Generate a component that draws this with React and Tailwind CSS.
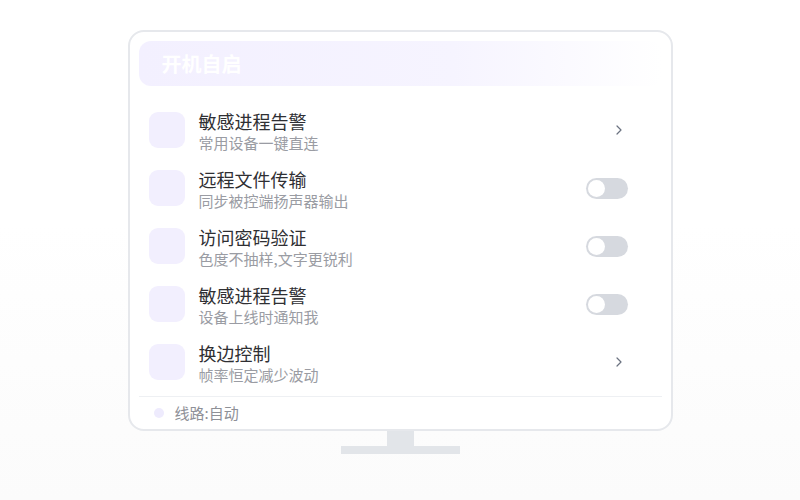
const rows = [
  { title: '敏感进程告警', sub: '常用设备一键直连', kind: 'chevron' },
  { title: '远程文件传输', sub: '同步被控端扬声器输出', kind: 'toggle' },
  { title: '访问密码验证', sub: '色度不抽样,文字更锐利', kind: 'toggle' },
  { title: '敏感进程告警', sub: '设备上线时通知我', kind: 'toggle' },
  { title: '换边控制', sub: '帧率恒定减少波动', kind: 'chevron' },
];

function Toggle() {
  return (
    <div className="flex h-[21px] w-[42px] items-center rounded-full bg-[#d6d9df] p-[2px]">
      <div className="h-[17px] w-[17px] rounded-full bg-white" />
    </div>
  );
}

function Chevron() {
  return (
    <div className="flex w-[42px] justify-end pr-[5px]">
      <svg width="8" height="12" viewBox="0 0 8 12" fill="none">
        <path d="M2 2l4 4-4 4" stroke="#6b7280" strokeWidth="1.2" strokeLinecap="round" strokeLinejoin="round" />
      </svg>
    </div>
  );
}

export default function App() {
  return (
    <div
      className="flex h-[500px] w-[800px] flex-col items-center bg-gradient-to-b from-white from-45% to-[#fbfbfb] pt-[30px]"
      style={{ fontFamily: '"Noto Sans CJK SC", "Noto Sans", sans-serif' }}
    >
      <div className="flex h-[401px] w-[545px] flex-col rounded-[16px] border-2 border-[#e6e8ec] bg-white px-[9px] pt-[9px]">
        <div className="flex h-[45px] items-center rounded-[12px] bg-gradient-to-r from-[#f3f0ff] via-[#f6f4ff] via-60% to-white pl-[23px]">
          <span className="text-[20px] font-bold text-white">开机自启</span>
        </div>

        <div className="mt-[15px] flex flex-col">
          {rows.map((r, i) => (
            <div key={i} className="flex h-[58px] items-center pl-[10px] pr-[34px]">
              <div className="h-[36px] w-[36px] rounded-[9px] bg-[#f2effe]" />
              <div className="ml-[14px] flex flex-1 flex-col pt-[1px]">
                <span className="text-[18px] leading-[24px] text-[#2f2f33]">{r.title}</span>
                <span className="text-[15px] leading-[20px] text-[#9a9ca3]">{r.sub}</span>
              </div>
              {r.kind === 'toggle' ? <Toggle /> : <Chevron />}
            </div>
          ))}
        </div>

        <div className="mt-[5px] h-px bg-[#eef0f3]" />

        <div className="flex h-[32px] items-center pl-[15px]">
          <div className="h-[10px] w-[10px] rounded-full bg-[#eeebfd]" />
          <span className="ml-[11px] text-[15px] text-[#8e9097]">线路:自动</span>
        </div>
      </div>

      <div className="h-[15px] w-[27px] bg-[#e2e5e9]" />
      <div className="h-[8px] w-[119px] bg-[#e2e5e9]" />
    </div>
  );
}
